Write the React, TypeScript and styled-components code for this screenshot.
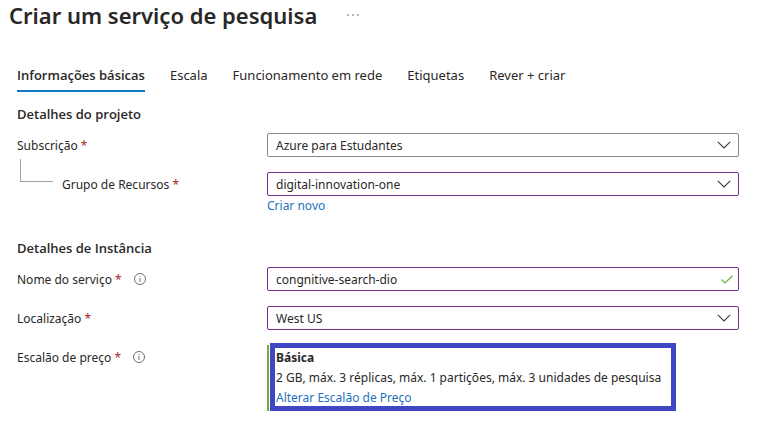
import React from "react";
import styled, { createGlobalStyle } from "styled-components";

const GlobalStyle = createGlobalStyle`
  *, *::before, *::after { box-sizing: border-box; }
  body {
    margin: 0;
    background: #fff;
    color: #292827;
    font: 12px/20px "Noto Sans", "Open Sans", sans-serif;
  }
`;

const Page = styled.main`
  padding: 0 21px 11px 17px;
`;

const TitleBar = styled.header`
  display: flex;
  align-items: center;
  gap: 28px;
  height: 30px;
  margin-left: -8px;
`;

const Title = styled.h1`
  margin: 0;
  font-size: 22px;
  line-height: 30px;
  font-weight: 600;
  white-space: nowrap;
`;

const MoreButton = styled.button`
  display: flex;
  padding: 0;
  border: 0;
  background: none;
  color: #605e5c;
`;

const Tabs = styled.nav`
  display: flex;
  gap: 25px;
  margin-top: 34px;
`;

const Tab = styled.button<{ $active?: boolean }>`
  height: 28px;
  padding: 0 0 4px;
  border: 0;
  border-bottom: 2px solid ${(p) => (p.$active ? "#0f78c4" : "transparent")};
  background: none;
  color: inherit;
  font: 13px/20px ${(p) => (p.$active ? '"Open Sans"' : '"Noto Sans"')}, sans-serif;
  font-weight: ${(p) => (p.$active ? 600 : 400)};
  white-space: nowrap;
`;

const Section = styled.section`
  margin-top: 12px;

  & + & {
    margin-top: 22px;
  }
`;

const SectionTitle = styled.h2`
  margin: 0 0 9px;
  font: 600 13px/20px "Open Sans", sans-serif;
`;

const Rows = styled.div`
  display: grid;
  gap: 15px;
`;

const Row = styled.div`
  display: grid;
  grid-template-columns: 250px minmax(0, 1fr);
  align-items: start;
`;

const LabelCell = styled.div`
  display: flex;
  align-items: center;
  height: 24px;
  gap: 9px;
  white-space: nowrap;
`;

const LabelText = styled.label`
  padding-top: 2px;
`;

const Required = styled.span`
  color: #a4262c;
`;

const Branch = styled.span`
  align-self: flex-end;
  width: 33px;
  height: 23px;
  margin: 0 0 14px 3px;
  border: solid #a3a19f;
  border-width: 0 0 1px 1px;
`;

const InfoButton = styled.button`
  display: flex;
  margin-left: 3px;
  padding: 0;
  border: 0;
  background: none;
  color: #605e5c;
`;

const Control = styled.div`
  display: grid;
  align-items: center;

  & > * {
    grid-area: 1 / 1;
  }
`;

const fieldStyle = `
  width: 100%;
  height: 24px;
  margin: 0;
  border-radius: 2px;
  background: #fff;
  color: inherit;
  font: inherit;
  line-height: 20px;
  outline: 0;
`;

const Select = styled.select<{ $changed?: boolean }>`
  ${fieldStyle}
  appearance: none;
  padding: 2px 30px 0 8px;
  border: 1px solid ${(p) => (p.$changed ? "#75308f" : "#8a8886")};
`;

const TextInput = styled.input`
  ${fieldStyle}
  padding: 0 30px 0 8px;
  border: 1px solid #75308f;
`;

const FieldIcon = styled.svg<{ $inset: number }>`
  justify-self: end;
  margin-right: ${(p) => p.$inset}px;
  pointer-events: none;
`;

const Link = styled.a`
  color: #1f72bd;
  text-decoration: none;
`;

const LinkLine = styled.div`
  line-height: 20px;
`;

const Tier = styled.div`
  position: relative;
  justify-self: start;
  display: grid;
  padding: 3px 15px 3px 7px;
  border-left: 2px solid #7fa832;
  white-space: nowrap;

  &::after {
    content: "";
    position: absolute;
    inset: -2px 0 0 1px;
    border: 5px solid #4047c4;
    pointer-events: none;
  }
`;

const TierName = styled.strong`
  font-weight: 700;
`;

function Info({ label }: { label: string }) {
  return (
    <InfoButton type="button" aria-label={label}>
      <svg width="12" height="12" viewBox="0 0 12 12" fill="none" stroke="currentColor">
        <circle cx="6" cy="6" r="5.5" strokeWidth="0.9" />
        <path d="M6 5v4M6 3v1" strokeWidth="0.9" />
      </svg>
    </InfoButton>
  );
}

function FieldLabel({ id, text, info, nested }: { id: string; text: string; info?: boolean; nested?: boolean }) {
  return (
    <LabelCell>
      {nested && <Branch />}
      <LabelText htmlFor={id}>
        {text} <Required>*</Required>
      </LabelText>
      {info && <Info label={`Informações: ${text}`} />}
    </LabelCell>
  );
}

function Dropdown({ id, value, changed }: { id: string; value: string; changed?: boolean }) {
  return (
    <Control>
      <Select id={id} $changed={changed} defaultValue={value}>
        <option>{value}</option>
      </Select>
      <FieldIcon $inset={8} width="14" height="8" viewBox="0 0 14 8" fill="none" stroke="#3b3a39">
        <path d="M.8 .8 7 7 13.2 .8" strokeWidth="1.1" />
      </FieldIcon>
    </Control>
  );
}

const tabs = ["Informações básicas", "Escala", "Funcionamento em rede", "Etiquetas", "Rever + criar"];

export default function App() {
  return (
    <Page>
      <GlobalStyle />
      <TitleBar>
        <Title>Criar um serviço de pesquisa</Title>
        <MoreButton type="button" aria-label="Mais">
          <svg width="16" height="4" viewBox="0 0 16 4" fill="currentColor">
            <circle cx="3" cy="2" r="0.8" />
            <circle cx="8" cy="2" r="0.8" />
            <circle cx="13" cy="2" r="0.8" />
          </svg>
        </MoreButton>
      </TitleBar>
      <Tabs>
        {tabs.map((tab, i) => (
          <Tab key={tab} type="button" $active={i === 0}>
            {tab}
          </Tab>
        ))}
      </Tabs>

      <Section>
        <SectionTitle>Detalhes do projeto</SectionTitle>
        <Rows>
          <Row>
            <FieldLabel id="subscription" text="Subscrição" />
            <Dropdown id="subscription" value="Azure para Estudantes" />
          </Row>
          <Row>
            <FieldLabel id="group" text="Grupo de Recursos" nested />
            <div>
              <Dropdown id="group" value="digital-innovation-one" changed />
              <LinkLine>
                <Link href="#criar">Criar novo</Link>
              </LinkLine>
            </div>
          </Row>
        </Rows>
      </Section>

      <Section>
        <SectionTitle>Detalhes de Instância</SectionTitle>
        <Rows>
          <Row>
            <FieldLabel id="name" text="Nome do serviço" info />
            <Control>
              <TextInput id="name" type="text" defaultValue="congnitive-search-dio" />
              <FieldIcon $inset={6} width="12" height="9" viewBox="0 0 12 9" fill="none" stroke="#6bb23a">
                <path d="M.5 4.5 4 8 11.5 .7" strokeWidth="1.2" />
              </FieldIcon>
            </Control>
          </Row>
          <Row>
            <FieldLabel id="location" text="Localização" />
            <Dropdown id="location" value="West US" changed />
          </Row>
          <Row>
            <FieldLabel id="tier" text="Escalão de preço" info />
            <Tier id="tier">
              <TierName>Básica</TierName>
              <span>2 GB, máx. 3 réplicas, máx. 1 partições, máx. 3 unidades de pesquisa</span>
              <Link href="#alterar">Alterar Escalão de Preço</Link>
            </Tier>
          </Row>
        </Rows>
      </Section>
    </Page>
  );
}
